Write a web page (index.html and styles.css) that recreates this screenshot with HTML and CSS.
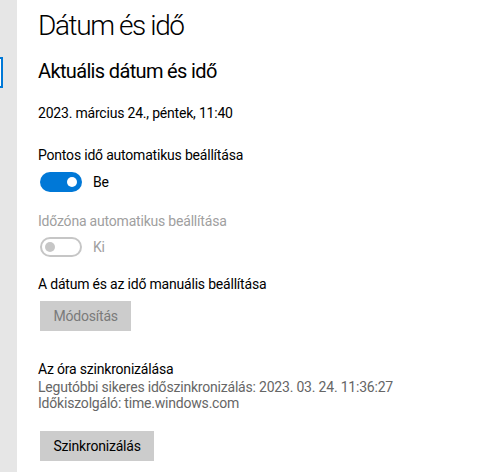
FILE: index.html
```html
<!DOCTYPE html>
<html lang="hu">
<head>
    <meta charset="utf-8">
    <title>Dátum és idő</title>
    <link rel="stylesheet" href="styles.css">
</head>
<body>
    <div class="sidebar">
        <div class="nav-focus"></div>
    </div>
    <div class="content">
        <h1>Dátum és idő</h1>
        <h2>Aktuális dátum és idő</h2>
        <p class="now">2023. március 24., péntek, 11:40</p>

        <div class="setting first">
            <div class="label">Pontos idő automatikus beállítása</div>
            <div class="toggle-row">
                <span class="toggle on"><span class="knob"></span></span>
                <span class="state">Be</span>
            </div>
        </div>

        <div class="setting disabled">
            <div class="label">Időzóna automatikus beállítása</div>
            <div class="toggle-row">
                <span class="toggle off"><span class="knob"></span></span>
                <span class="state">Ki</span>
            </div>
        </div>

        <div class="setting manual">
            <div class="label">A dátum és az idő manuális beállítása</div>
            <button class="btn" disabled>Módosítás</button>
        </div>

        <div class="setting sync">
            <div class="label">Az óra szinkronizálása</div>
            <div class="info">Legutóbbi sikeres időszinkronizálás: 2023. 03. 24. 11:36:27</div>
            <div class="info">Időkiszolgáló: time.windows.com</div>
            <button class="btn">Szinkronizálás</button>
        </div>
    </div>
</body>
</html>
```

FILE: styles.css
```css
body {
    margin: 0;
    display: flex;
    height: 472px;
    overflow: hidden;
    background-color: #ffffff;
    font-family: Roboto, 'Noto Sans', sans-serif;
    font-size: 14px;
    letter-spacing: -0.2px;
    color: #000000;
}

.sidebar {
    width: 17px;
    flex-shrink: 0;
    background-color: #e6e6e6;
    padding-top: 57px;
}

.nav-focus {
    width: 1px;
    height: 27px;
    border: 2px solid #0078d7;
    border-left: none;
    background-color: #ffffff;
}

.content {
    padding-left: 21px;
}

h1 {
    margin: 7px 0 0;
    font-size: 28px;
    font-weight: 300;
    line-height: 38px;
    letter-spacing: -1.4px;
}

h2 {
    margin: 12px 0 0;
    font-size: 20px;
    font-weight: 400;
    line-height: 28px;
    letter-spacing: -0.65px;
}

.now {
    margin: 18px 0 0;
    line-height: 20px;
}

.label {
    line-height: 20px;
}

.first {
    margin-top: 22px;
}

.disabled {
    margin-top: 19px;
    color: #a0a0a0;
}

.manual {
    margin-top: 17px;
}

.toggle-row {
    display: flex;
    align-items: center;
    gap: 11px;
    height: 20px;
    margin-top: 7px;
    padding-left: 2px;
}

.disabled .toggle-row {
    margin-top: 6px;
}

.toggle {
    box-sizing: border-box;
    width: 42px;
    height: 20px;
    border-radius: 10px;
    display: flex;
    align-items: center;
    padding: 0 5px;
}

.toggle .knob {
    width: 10px;
    height: 10px;
    border-radius: 50%;
}

.toggle.on {
    background-color: #0078d7;
    justify-content: flex-end;
}

.toggle.on .knob {
    background-color: #ffffff;
}

.toggle.off {
    border: 2px solid #c6c6c6;
    padding: 0 3px;
}

.toggle.off .knob {
    background-color: #c6c6c6;
}

.btn {
    display: block;
    margin: 7px 0 0 2px;
    height: 30px;
    padding: 0 13.5px;
    border: none;
    background-color: #cccccc;
    font-family: inherit;
    font-size: 14px;
    letter-spacing: -0.2px;
    color: #000000;
}

.btn:disabled {
    color: #7a7a7a;
}

.sync {
    margin-top: 28px;
}

.info {
    color: #666666;
    line-height: 16px;
}

.sync .btn {
    margin-top: 20px;
}
```
